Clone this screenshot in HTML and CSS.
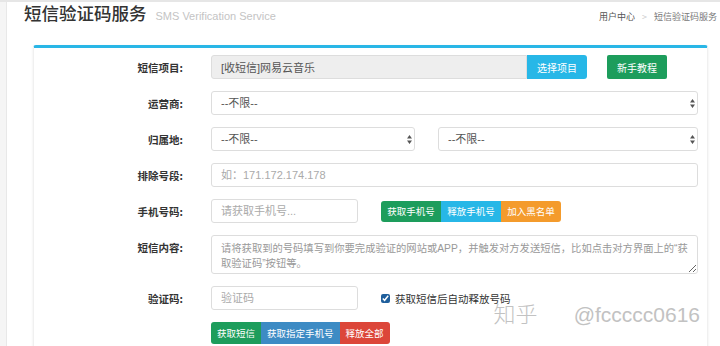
FILE: index.html
```html
<!DOCTYPE html>
<html lang="zh-CN">
<head>
    <meta charset="UTF-8">
    <meta name="viewport" content="width=device-width, initial-scale=1.0">
    <title>短信验证码服务</title>
    <link rel="stylesheet" href="styles.css">
</head>
<body>
    <div class="page">
        <aside class="sidebar"></aside>
        <main class="main">
            <header class="head">
                <h1 class="title">短信验证码服务<small>SMS Verification Service</small></h1>
                <nav class="crumb"><a href="#">用户中心</a><span class="sep">&gt;</span><span>短信验证码服务</span></nav>
            </header>

            <section class="card">
                <form class="form">
                    <label class="lbl">短信项目:</label>
                    <div class="field">
                        <div class="group">
                            <input class="ctrl ctrl-ro w-project" type="text" value="[收短信]网易云音乐" readonly>
                            <button type="button" class="btn btn-info btn-md">选择项目</button>
                        </div>
                        <button type="button" class="btn btn-success btn-md btn-guide">新手教程</button>
                    </div>

                    <label class="lbl">运营商:</label>
                    <div class="field">
                        <div class="select grow">
                            <select class="ctrl"><option>--不限--</option></select>
                            <svg class="arrows" width="5" height="9" viewBox="0 0 5 9"><path d="M2.5 0L5 3.5H0z M2.5 9L5 5.5H0z" fill="#555"/></svg>
                        </div>
                    </div>

                    <label class="lbl">归属地:</label>
                    <div class="field gap-wide">
                        <div class="select w-province">
                            <select class="ctrl"><option>--不限--</option></select>
                            <svg class="arrows" width="5" height="9" viewBox="0 0 5 9"><path d="M2.5 0L5 3.5H0z M2.5 9L5 5.5H0z" fill="#555"/></svg>
                        </div>
                        <div class="select grow">
                            <select class="ctrl"><option>--不限--</option></select>
                            <svg class="arrows" width="5" height="9" viewBox="0 0 5 9"><path d="M2.5 0L5 3.5H0z M2.5 9L5 5.5H0z" fill="#555"/></svg>
                        </div>
                    </div>

                    <label class="lbl">排除号段:</label>
                    <div class="field">
                        <input class="ctrl grow" type="text" placeholder="如：171.172.174.178">
                    </div>

                    <label class="lbl">手机号码:</label>
                    <div class="field gap-wide">
                        <input class="ctrl w-short" type="text" placeholder="请获取手机号...">
                        <div class="group">
                            <button type="button" class="btn btn-success btn-sm">获取手机号</button>
                            <button type="button" class="btn btn-info btn-sm">释放手机号</button>
                            <button type="button" class="btn btn-warning btn-sm">加入黑名单</button>
                        </div>
                    </div>

                    <label class="lbl lbl-top">短信内容:</label>
                    <div class="field">
                        <textarea class="ctrl grow area" placeholder="请将获取到的号码填写到你要完成验证的网站或APP，并触发对方发送短信，比如点击对方界面上的“获取验证码”按钮等。"></textarea>
                    </div>

                    <label class="lbl">验证码:</label>
                    <div class="field gap-wide">
                        <input class="ctrl w-short" type="text" placeholder="验证码">
                        <label class="check"><input type="checkbox" checked>获取短信后自动释放号码</label>
                    </div>

                    <span></span>
                    <div class="field">
                        <div class="group">
                            <button type="button" class="btn btn-success btn-lg">获取短信</button>
                            <button type="button" class="btn btn-primary btn-lg">获取指定手机号</button>
                            <button type="button" class="btn btn-danger btn-lg">释放全部</button>
                        </div>
                    </div>
                </form>
            </section>
        </main>
        <div class="watermark">知乎<span>@fccccc0616</span></div>
    </div>
</body>
</html>
```

FILE: styles.css
```css
* {
    box-sizing: border-box;
}
body {
    margin: 0;
    background-color: #fff;
    font-family: "Liberation Sans", "Noto Sans CJK SC", sans-serif;
    color: #333;
    overflow: hidden;
}
.page {
    position: relative;
    display: flex;
    height: 346px;
    border-top: 2px solid #e6e6e6;
}
.sidebar {
    width: 7px;
    flex: none;
    background-color: #f5f5f5;
    border-right: 1px solid #e8e8e8;
}
.main {
    flex: 1;
    padding: 0 12px 0 17px;
}
.head {
    display: flex;
    justify-content: space-between;
    align-items: center;
    height: 24px;
    margin-right: -9px;
}
.title {
    margin: 0;
    font-family: "Noto Sans CJK SC", sans-serif;
    font-size: 17.5px;
    font-weight: 500;
    line-height: 24px;
    color: #333;
}
.title small {
    margin-left: 9px;
    font-family: "Liberation Sans", sans-serif;
    font-size: 11px;
    font-weight: normal;
    color: #c4c4c4;
}
.crumb {
    padding-top: 4px;
    font-family: "Noto Sans CJK SC", sans-serif;
    font-size: 9px;
    color: #777;
}
.crumb a {
    color: #555;
    text-decoration: none;
}
.crumb .sep {
    margin: 0 7px;
    color: #ccc;
}
.card {
    margin: 19px 0 0 9px;
    padding: 7px 9px 4px 0;
    border: 1px solid #f0f0f0;
    border-top: 3px solid #29b6e6;
    border-radius: 3px 3px 0 0;
    box-shadow: 0 1px 3px rgba(0,0,0,0.08);
}
.form {
    display: grid;
    grid-template-columns: 149px 1fr;
    column-gap: 28px;
    row-gap: 12px;
    align-items: center;
}
.lbl {
    text-align: right;
    font-family: "Noto Sans CJK SC", sans-serif;
    font-size: 10.5px;
    font-weight: bold;
    color: #333;
}
.lbl-top {
    align-self: start;
    padding-top: 5px;
    line-height: 15px;
}
.field {
    display: flex;
    align-items: center;
    gap: 20px;
}
.field.gap-wide {
    gap: 23px;
}
.group {
    display: flex;
}
.grow {
    flex: 1;
}
.ctrl {
    height: 24px;
    padding: 0 9px;
    border: 1px solid #ddd;
    border-radius: 3px;
    background-color: #fff;
    font-family: "Liberation Sans", "Noto Sans CJK SC", sans-serif;
    font-size: 11px;
    color: #555;
    outline: none;
}
.ctrl::placeholder {
    color: #aaa;
}
.ctrl-ro {
    background-color: #eee;
    border-radius: 3px 0 0 3px;
}
.w-project {
    width: 316px;
}
.w-province {
    width: 204px;
}
.w-short {
    width: 147px;
}
.select {
    position: relative;
    display: flex;
}
.select select {
    flex: 1;
    appearance: none;
    -webkit-appearance: none;
}
.select .arrows {
    position: absolute;
    right: 3px;
    top: 8px;
}
.area {
    height: 39px;
    padding: 5px 4px 5px 9px;
    line-height: 15px;
    font-size: 10.3px;
    overflow: hidden;
    resize: vertical;
}
.area::placeholder {
    color: #999;
}
.check {
    display: flex;
    align-items: center;
    gap: 5px;
    font-family: "Noto Sans CJK SC", sans-serif;
    font-size: 10.5px;
    color: #333;
}
.check input {
    width: 9px;
    height: 9px;
    margin: 0;
    accent-color: #1f5f9c;
}
.btn {
    border: none;
    color: #fff;
    font-family: "Noto Sans CJK SC", sans-serif;
    font-size: 10px;
    cursor: pointer;
    padding: 0;
}
.btn-md {
    width: 60px;
    height: 24px;
}
.btn-sm {
    width: 60px;
    height: 21px;
    font-size: 9.5px;
}
.btn-lg {
    height: 22px;
    padding: 0 6px;
    font-size: 9.5px;
}
.group .btn:first-child {
    border-radius: 3px 0 0 3px;
}
.group .btn:last-child {
    border-radius: 0 3px 3px 0;
}
.btn-guide {
    border-radius: 2px;
}
.btn-info {
    background-color: #27b7e7;
}
.btn-success {
    background-color: #1d9d5c;
}
.btn-warning {
    background-color: #f49b2c;
}
.btn-primary {
    background-color: #3d8bc4;
}
.btn-danger {
    background-color: #dc4639;
}
.watermark {
    position: absolute;
    right: 20px;
    top: 294px;
    font-family: "Noto Sans CJK SC", sans-serif;
    font-size: 22px;
    font-weight: 300;
    color: #c2c2c2;
    text-shadow: 0 0 2px #fff;
}
.watermark span {
    margin-left: 36px;
    font-family: "Liberation Sans", sans-serif;
    font-size: 21px;
    font-weight: normal;
}
```
